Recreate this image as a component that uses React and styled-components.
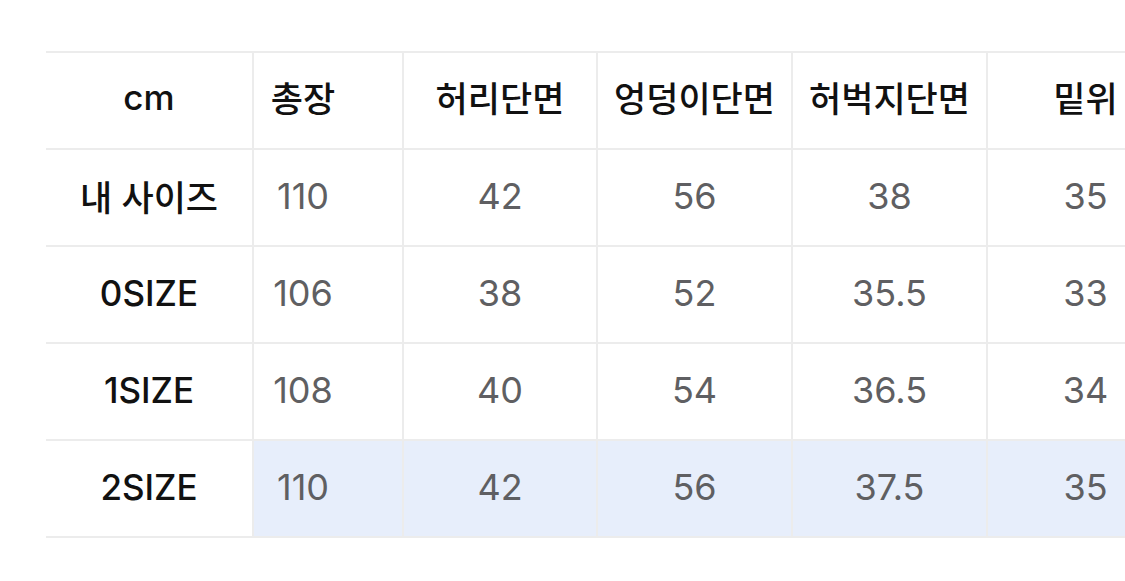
import styled, { createGlobalStyle } from 'styled-components';

const GlobalStyle = createGlobalStyle`
  html, body {
    margin: 0;
    padding: 0;
    background: #fff;
    overflow: hidden;
  }
`;

const columns = [
  { key: 'total', label: '총장', width: 150, shift: 50 },
  { key: 'waist', label: '허리단면', width: 194 },
  { key: 'hip', label: '엉덩이단면', width: 195 },
  { key: 'thigh', label: '허벅지단면', width: 195 },
  { key: 'rise', label: '밑위', width: 196 },
];

const rows = [
  { name: '내 사이즈', values: ['110', '42', '56', '38', '35'] },
  { name: '0SIZE', values: ['106', '38', '52', '35.5', '33'] },
  { name: '1SIZE', values: ['108', '40', '54', '36.5', '34'] },
  { name: '2SIZE', values: ['110', '42', '56', '37.5', '35'], active: true },
];

const App = () => {
  return (
    <StyledPage>
      <GlobalStyle />
      <SizeTable>
        <colgroup>
          <col style={{ width: 207 }} />
          {columns.map(col => (
            <col key={col.key} style={{ width: col.width }} />
          ))}
        </colgroup>
        <thead>
          <tr>
            <HeadCell>cm</HeadCell>
            {columns.map(col => (
              <HeadCell key={col.key} $shift={col.shift}>{col.label}</HeadCell>
            ))}
          </tr>
        </thead>
        <tbody>
          {rows.map(row => (
            <tr key={row.name}>
              <LabelCell>{row.name}</LabelCell>
              {row.values.map((v, i) => (
                <ValueCell key={i} $active={row.active} $shift={columns[i].shift}>
                  {v}
                </ValueCell>
              ))}
            </tr>
          ))}
        </tbody>
      </SizeTable>
    </StyledPage>
  );
}

const StyledPage = styled.div`
  width: 1125px;
  height: 581px;
  overflow: hidden;
  padding: 51px 0 0 46px;
  box-sizing: border-box;
  font-family: Inter, "Noto Sans CJK KR", sans-serif;
`;

const SizeTable = styled.table`
  border-collapse: collapse;
  table-layout: fixed;
  width: 1137px;

  tr {
    height: 97px;
  }

  th, td {
    border-top: 2px solid #ececec;
    border-bottom: 2px solid #ececec;
    border-left: 2px solid #ececec;
    padding: 0 0 4px 0;
    text-align: center;
    vertical-align: middle;
    white-space: nowrap;
  }

  th {
    padding-bottom: 8px;
  }

  th:first-child, td:first-child {
    border-left: none;
  }
`;

const HeadCell = styled.th`
  font-family: "Noto Sans CJK KR", sans-serif;
  font-size: 35px;
  font-weight: 500;
  color: #111;
  padding-right: ${props => props.$shift || 0}px !important;

  &:first-child {
    font-family: Inter, sans-serif;
    font-size: 35px;
  }
`;

const LabelCell = styled.td`
  font-family: Inter, "Noto Sans CJK KR", sans-serif;
  font-size: 35px;
  font-weight: 500;
  color: #111;
  background: #fff;
`;

const ValueCell = styled.td`
  font-size: 36px;
  font-weight: 400;
  color: #5f5f62;
  background: ${props => props.$active ? '#e7eefb' : '#fff'};
  padding-right: ${props => props.$shift || 0}px !important;
`;

export default App;
